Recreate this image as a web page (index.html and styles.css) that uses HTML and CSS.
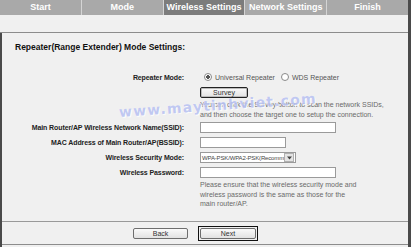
FILE: index.html
```html
<!DOCTYPE html>
<html>
<head>
<meta charset="utf-8">
<link rel="stylesheet" href="styles.css">
</head>
<body>
<div class="wrap">
  <div class="tabs">
    <div class="tab">Start</div>
    <div class="tab">Mode</div>
    <div class="tab active">Wireless Settings</div>
    <div class="tab">Network Settings</div>
    <div class="tab last">Finish</div>
  </div>
  <div class="band"></div>
  <div class="main">
    <div class="content">
      <div class="title">Repeater(Range Extender) Mode Settings:</div>
      <div class="row r-radio">
        <div class="label">Repeater Mode:</div>
        <div class="field radios">
          <span class="radio checked"></span><span class="rtext">Universal Repeater</span>
          <span class="radio"></span><span class="rtext">WDS Repeater</span>
        </div>
      </div>
      <div class="row r-survey">
        <div class="label"></div>
        <div class="field"><button class="btn survey">Survey</button></div>
      </div>
      <div class="row r-help1">
        <div class="label"></div>
        <div class="field help">You can click the Survey button to scan the network SSIDs,<br>and then choose the target one to setup the connection.</div>
      </div>
      <div class="row r-input first">
        <div class="label">Main Router/AP Wireless Network Name(SSID):</div>
        <div class="field"><input class="txt long" type="text"></div>
      </div>
      <div class="row r-input">
        <div class="label">MAC Address of Main Router/AP(BSSID):</div>
        <div class="field"><input class="txt short" type="text"></div>
      </div>
      <div class="row r-input">
        <div class="label">Wireless Security Mode:</div>
        <div class="field">
          <div class="select"><span class="sel-text">WPA-PSK/WPA2-PSK(Recomm</span><span class="sel-arrow"><svg width="5" height="4" viewBox="0 0 5 4"><path d="M0 0.5 L5 0.5 L2.5 3.5 Z" fill="#444"/></svg></span></div>
        </div>
      </div>
      <div class="row r-input">
        <div class="label">Wireless Password:</div>
        <div class="field"><input class="txt long" type="text"></div>
      </div>
      <div class="row r-help2">
        <div class="label"></div>
        <div class="field help">Please ensure that the wireless security mode and<br>wireless password is the same as those for the<br>main router/AP.</div>
      </div>
    </div>
    <div class="footer">
      <button class="btn back">Back</button>
      <div class="focus-frame"><button class="btn next">Next</button></div>
    </div>
  </div>
  <div class="watermark">www.maytinhviet.com</div>
</div>
</body>
</html>
```
FILE: styles.css
```css
html, body {
  margin: 0;
  padding: 0;
  background: #f0f0f0;
}
.wrap {
  position: relative;
  width: 408px;
  height: 247px;
  border-right: 3px solid #4a4a4a;
  background: #f0f0f0;
  display: flex;
  flex-direction: column;
  font-family: "Liberation Sans", Arial, sans-serif;
  overflow: hidden;
}
.tabs {
  display: flex;
  height: 15px;
  background: #a9a9a9;
}
.tab {
  flex: 1;
  color: #fff;
  font-weight: bold;
  font-size: 9px;
  line-height: 15px;
  text-align: center;
  border-right: 1px solid #d4d4d4;
  white-space: nowrap;
}
.tab.last { border-right: none; }
.tab.active { background: #7c7c7c; }
.band {
  height: 17px;
  border-bottom: 1px solid #8c8c8c;
}
.main {
  flex: 1;
  display: flex;
  flex-direction: column;
  border-left: 2px solid #4a4a4a;
}
.content {
  flex: 1;
}
.title {
  margin-top: 8px;
  padding-left: 13px;
  font-size: 8.5px;
  font-weight: bold;
  line-height: 12px;
  color: #111;
}
.row {
  display: grid;
  grid-template-columns: 182px 1fr;
  column-gap: 16px;
  align-items: center;
}
.label {
  text-align: right;
  font-size: 7px;
  font-weight: bold;
  color: #222;
  white-space: nowrap;
  letter-spacing: -0.1px;
}
.field {
  display: flex;
  align-items: center;
}
.r-radio { margin-top: 18px; height: 12px; }
.r-survey { margin-top: 4px; height: 11px; }
.r-help1 { margin-top: 2px; }
.r-input { margin-top: 4px; height: 11px; }
.r-input.first { margin-top: 3px; }
.r-help2 { margin-top: 2px; }
.radios {
  font-size: 7px;
  color: #555;
}
.radio {
  width: 6px;
  height: 6px;
  border: 1px solid #8a8a8a;
  border-radius: 50%;
  background: #fff;
  margin-left: 4px;
  margin-right: 3px;
}
.radio.checked {
  background: radial-gradient(circle, #555 0, #555 1.6px, #fff 2px);
}
.rtext { margin-right: 2px; }
.help {
  display: block;
  font-size: 7px;
  line-height: 9.5px;
  color: #6a6a6a;
  white-space: nowrap;
}
.btn {
  font-family: "Liberation Sans", Arial, sans-serif;
  font-size: 7px;
  color: #333;
  padding: 0;
  height: 11px;
  line-height: 9px;
  background: linear-gradient(#fafafa, #e2e2e2);
  border: 1px solid #6e6e6e;
  border-radius: 2px;
}
.survey {
  width: 48px;
  border: 1px solid #222;
  box-shadow: inset 0 0 0 1px #bbb;
}
.txt {
  box-sizing: border-box;
  height: 11px;
  border: 1px solid #9a9a9a;
  background: #fff;
  padding: 0;
  margin: 0;
}
.txt.long { width: 136px; }
.txt.short { width: 86px; }
.select {
  box-sizing: border-box;
  width: 96px;
  height: 11px;
  border: 1px solid #9a9a9a;
  background: #fff;
  display: flex;
  align-items: center;
}
.sel-text {
  flex: 1;
  font-size: 6px;
  letter-spacing: -0.15px;
  color: #444;
  white-space: nowrap;
  padding-left: 1px;
}
.sel-arrow {
  width: 8px;
  height: 7px;
  margin-right: 1px;
  border: 1px solid #b0b0b0;
  background: #e4e4e4;
  display: flex;
  align-items: center;
  justify-content: center;
}
.footer {
  height: 22px;
  border-top: 1px solid #999;
  border-bottom: 1px solid #8c8c8c;
  margin-bottom: 2px;
  display: flex;
  align-items: center;
  padding-left: 131px;
}
.back { width: 55px; }
.focus-frame {
  margin-left: 10px;
  border: 1px solid #111;
  padding: 1px;
  display: flex;
}
.next { width: 56px; }
.watermark {
  position: absolute;
  left: 119px;
  top: 104px;
  font-family: "DejaVu Sans", sans-serif;
  font-weight: bold;
  font-size: 14px;
  letter-spacing: 1.2px;
  color: #b8c2f2;
  text-shadow: 0 0 1px #fff, 1px 1px 0 #fff;
  transform: rotate(-4deg);
  transform-origin: left center;
  opacity: 0.85;
  white-space: nowrap;
}
```
